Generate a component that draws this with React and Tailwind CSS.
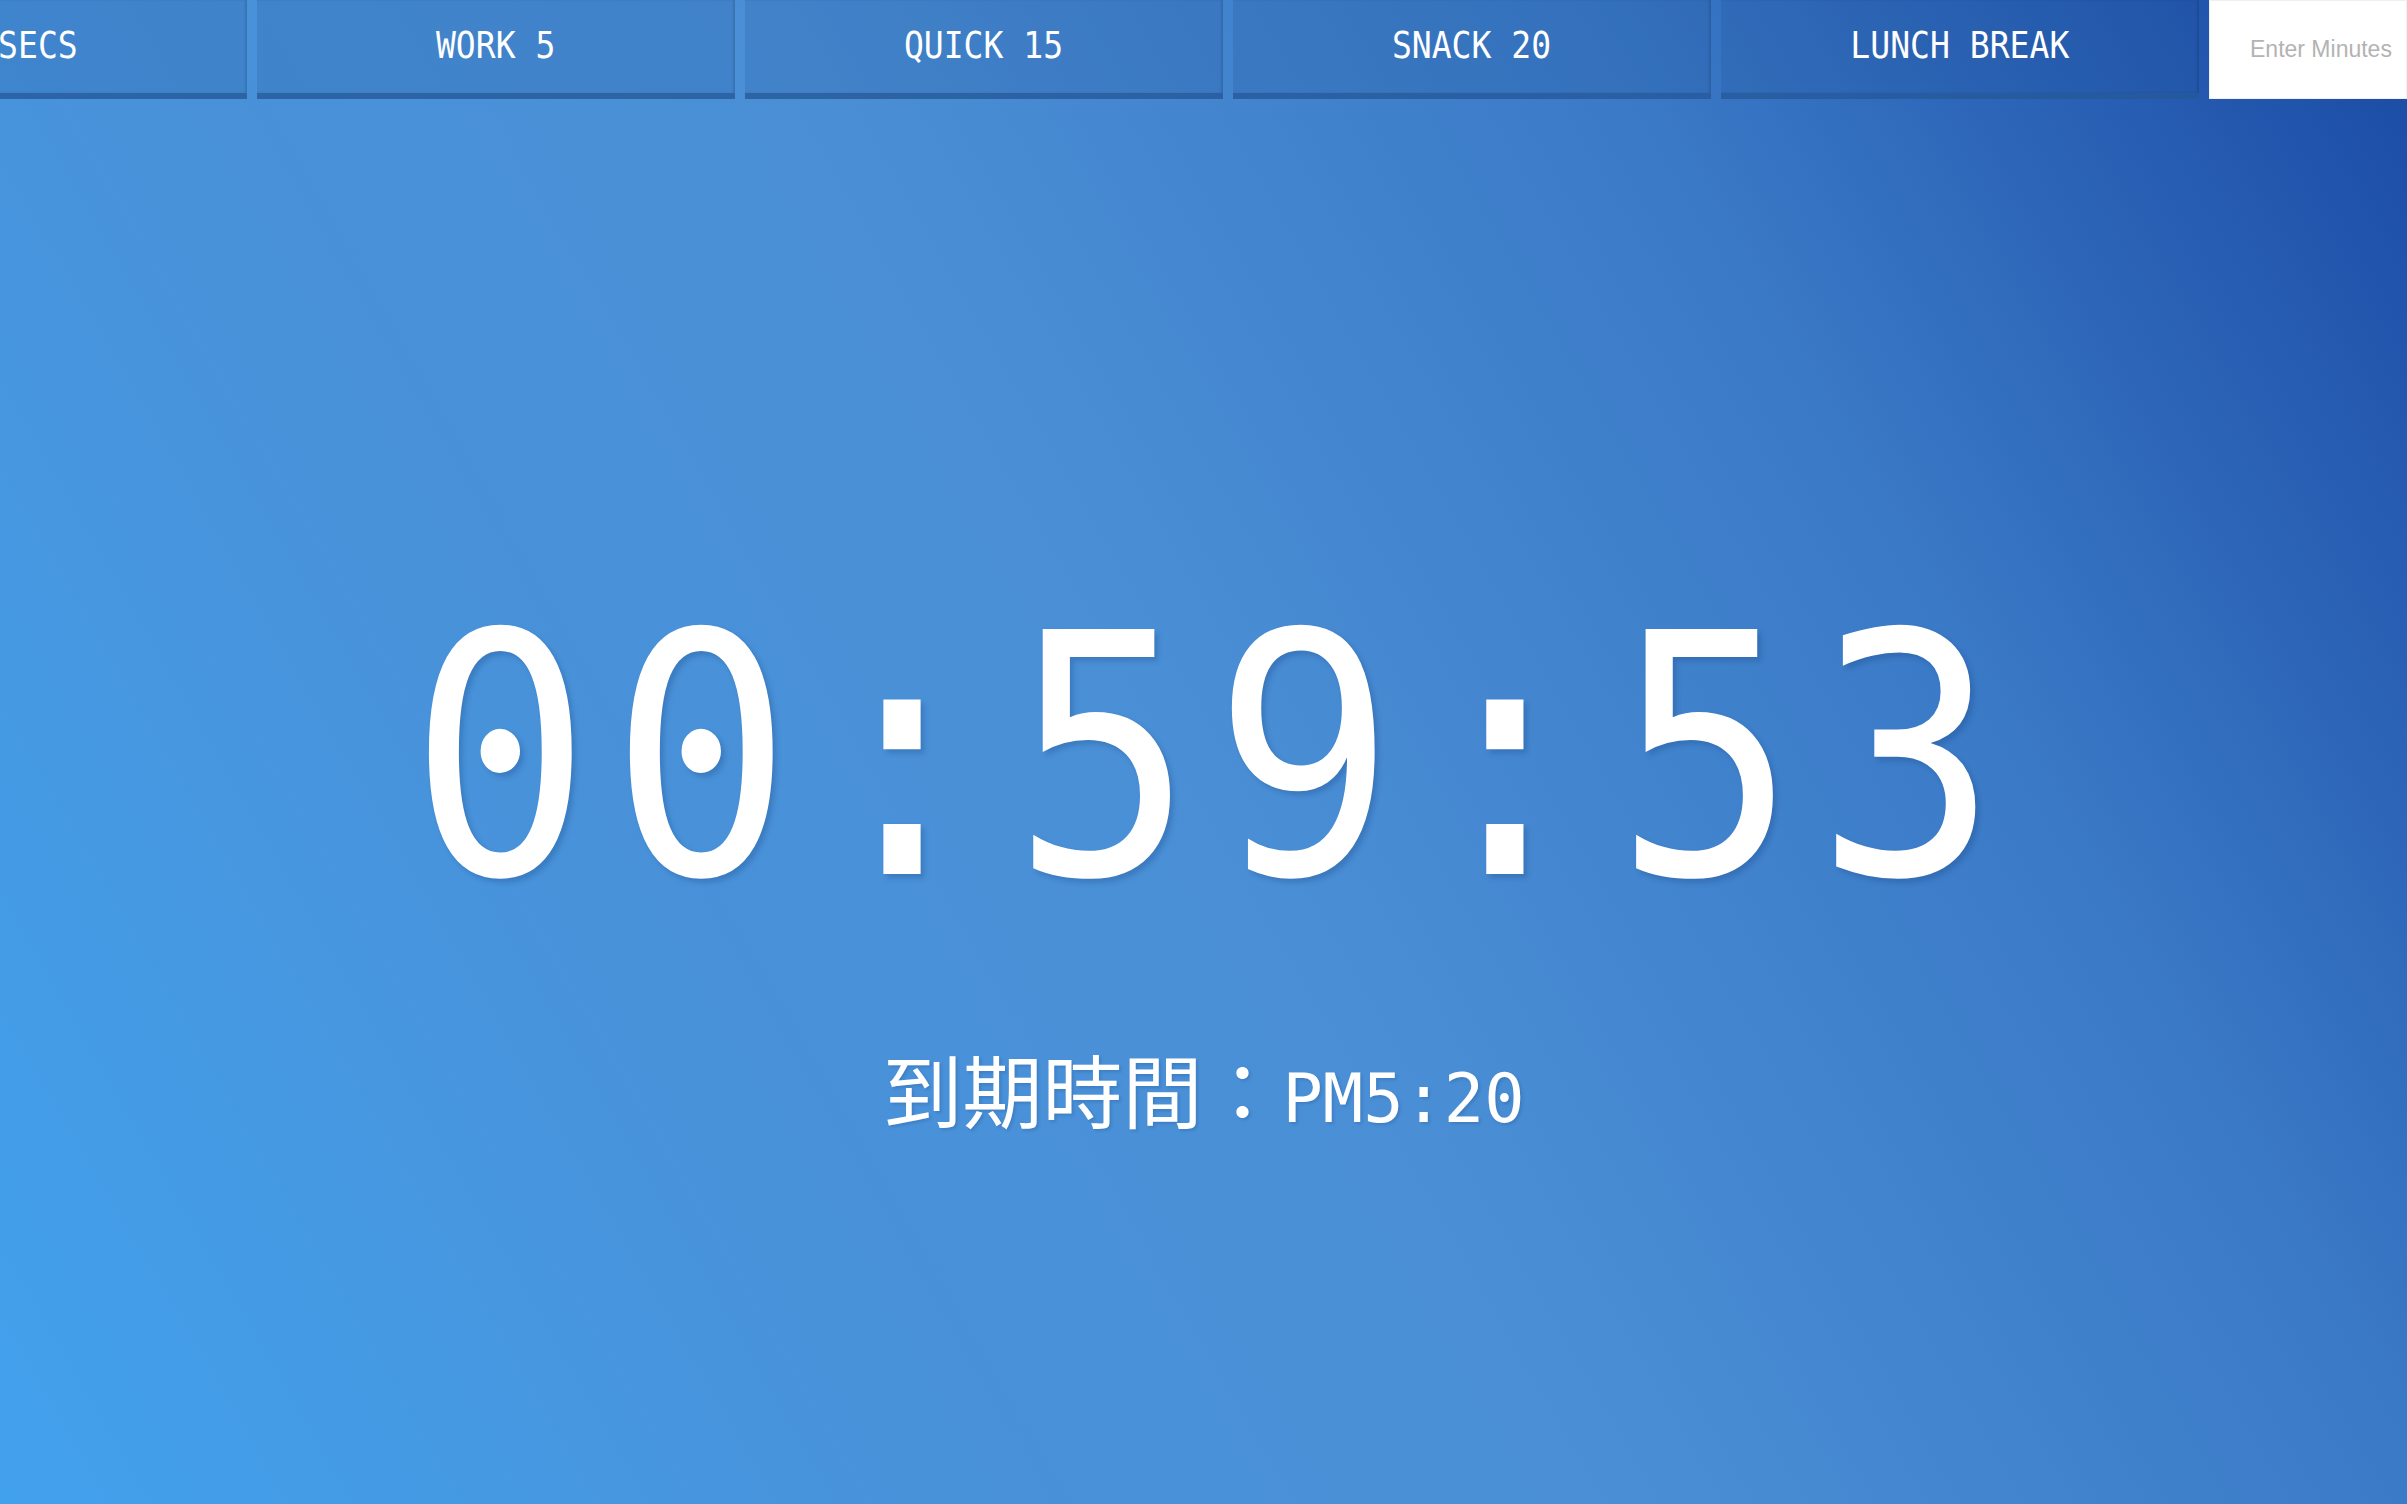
import { useState } from "react";

const PRESETS = [
  { label: "30 SECS", secs: 30 },
  { label: "WORK 5", secs: 300 },
  { label: "QUICK 15", secs: 900 },
  { label: "SNACK 20", secs: 1200 },
  { label: "LUNCH BREAK", secs: 3600 },
];

function pad(n) {
  return String(n).padStart(2, "0");
}

function formatClock(total) {
  const h = Math.floor(total / 3600);
  const m = Math.floor((total % 3600) / 60);
  const s = total % 60;
  return `${pad(h)}:${pad(m)}:${pad(s)}`;
}

export default function App() {
  const [remaining, setRemaining] = useState(3593);
  const [minutes, setMinutes] = useState("");

  return (
    <div className="flex min-h-screen w-full flex-col overflow-hidden bg-[linear-gradient(60deg,#42a1ed_0%,#4892da_28%,#4a8fd6_50%,#3a79c6_75%,#1a4aa5_100%)] text-white">
      {/* preset bar, overflowing to the left like the original */}
      <div className="flex h-[99px] w-full shrink-0 justify-end gap-[10px] overflow-hidden">
        {PRESETS.map((p) => (
          <button
            key={p.label}
            onClick={() => setRemaining(p.secs)}
            className="flex h-[99px] w-[478px] shrink-0 items-center justify-center border-b-[6px] border-[#275a99]/75 bg-[#1c4f96]/20 pb-1 shadow-[inset_-2px_0_2px_rgba(0,0,0,0.12)]"
          >
            <span className="scale-x-[0.87] font-['DejaVu_Sans_Mono',monospace] text-[38px] leading-none whitespace-nowrap text-white">
              {p.label}
            </span>
          </button>
        ))}
        <input
          value={minutes}
          onChange={(e) => setMinutes(e.target.value)}
          placeholder="Enter Minutes"
          className="h-[99px] w-[198px] shrink-0 border border-[#f0f0f0] bg-white pl-[40px] font-['Liberation_Sans',Arial,sans-serif] text-[23px] text-gray-700 outline-none placeholder:text-[#b3b3b3]"
        />
      </div>

      <main className="flex flex-col items-center pt-[491px]">
        <div className="scale-x-[0.9] pl-[21px] font-['DejaVu_Sans_Mono',monospace] text-[336px] leading-none tracking-[21px] whitespace-nowrap [text-shadow:4px_4px_6px_rgba(20,60,120,0.25)]">
          {formatClock(remaining)}
        </div>
        <div className="mt-[121px] flex items-baseline [text-shadow:2px_2px_3px_rgba(20,60,120,0.2)]">
          <span className="font-['Noto_Sans_CJK_TC',sans-serif] text-[80px] leading-none">
            到期時間：
          </span>
          <span className="font-['DejaVu_Sans_Mono',monospace] text-[67px] leading-none">
            PM5:20
          </span>
        </div>
      </main>
    </div>
  );
}
